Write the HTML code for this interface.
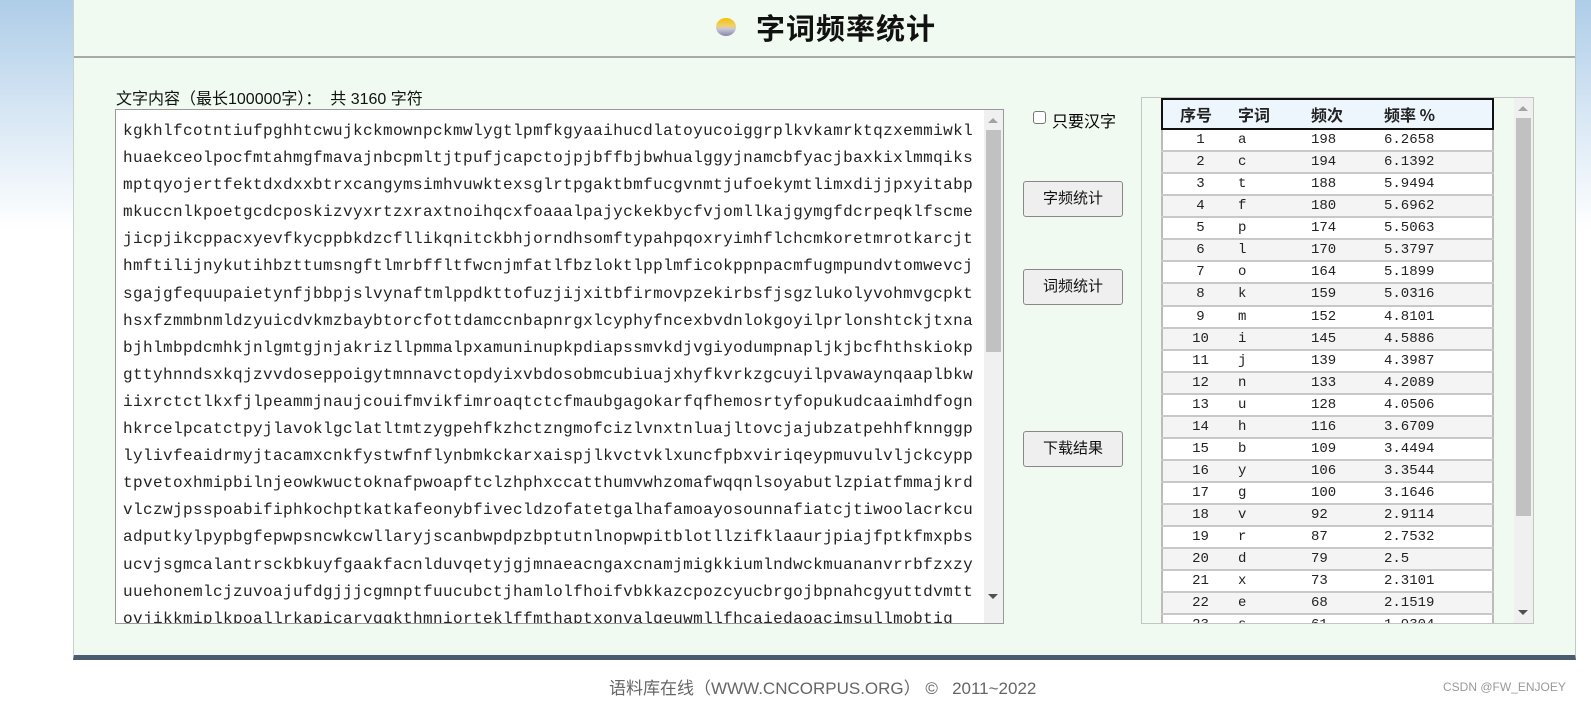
<!DOCTYPE html>
<html><head><meta charset="utf-8"><style>
*{margin:0;padding:0;box-sizing:border-box}
body{width:1591px;height:710px;overflow:hidden;position:relative;font-family:"Liberation Sans","Noto Sans CJK SC",sans-serif;background:linear-gradient(#aecde8 0,#d6e6f4 110px,#fff 230px,#fff 100%)}
#panel{position:absolute;left:73px;top:0;width:1503px;height:660px;background:#f0faf1;border-left:1px solid #c8d0d0;border-right:1px solid #c0c8c8;border-bottom:5px solid #4a5d70}
#hline{position:absolute;left:74px;top:56px;width:1501px;height:2px;background:#a8aaa8}
#title{position:absolute;left:756px;top:7px;font-size:29px;font-weight:bold;color:#111;font-family:"Noto Sans CJK SC",sans-serif;letter-spacing:1px;line-height:40px}
#dot{position:absolute;left:716px;top:18px;width:20px;height:18px;border-radius:50%;background:linear-gradient(#f5c000,#f0d070 45%,#c8c8d8 60%,#8888a8)}
#lbl{position:absolute;left:116px;top:85px;font-size:16px;color:#111}
#ta{position:absolute;left:115px;top:109px;width:889px;height:515px;background:#fff;border:1px solid #999;overflow:hidden}
#txt{position:absolute;left:7px;top:8px;font-family:"Liberation Mono",monospace;font-size:16px;letter-spacing:0.4px;line-height:27.1px;color:#222;white-space:pre}
#sb1{position:absolute;right:0;top:0;width:19px;height:513px;background:#f0f0f0}
#sb1 .th{position:absolute;left:2px;top:20px;width:15px;height:222px;background:#c1c1c1}
.ua,.da{position:absolute;left:4px;width:0;height:0;border-left:5px solid transparent;border-right:5px solid transparent}
.ua{top:8px;border-bottom:5px solid #a3a3a3}
.da{bottom:24px;border-top:5px solid #505050}
#chk{position:absolute;left:1033px;top:111px;width:13px;height:13px;border:1px solid #777;border-radius:3px;background:#fff}
#chkl{position:absolute;left:1052px;top:108px;font-size:16px}
.btn{position:absolute;left:1023px;width:100px;height:36px;background:#efefef;border:1px solid #888;border-radius:3px;font-size:15px;text-align:center;line-height:34px;color:#111}
#tb{position:absolute;left:1141px;top:97px;width:393px;height:527px;border:1px solid #c4c4c4;background:#f0faf1;overflow:hidden}
#tbl{position:absolute;left:19px;top:0;width:333px;border-collapse:collapse;table-layout:fixed;font-size:15px}
#tbl th{height:30px;background:#eef6fd;border-top:2px solid #111;border-bottom:2px solid #111;font-family:"Noto Sans CJK SC",sans-serif;font-weight:bold;font-size:16px;text-align:left;color:#222}
#tbl th:first-child{border-left:2px solid #111}
#tbl th:last-child{border-right:2px solid #111}
#tbl td{height:22.07px;border-bottom:2px solid #c8c8c8;font-family:"Liberation Mono",monospace;font-size:14px;padding:0;color:#222}
#tbl td:first-child{border-left:2px solid #bbb;text-align:center}
#tbl td:last-child{border-right:2px solid #bbb}
#tbl tr:nth-child(odd) td{background:#f4f4f4}
#tbl tr:nth-child(even) td{background:#fff}
#sb2{position:absolute;left:372px;top:0;width:19px;height:525px;background:#f0f0f0}
#sb2 .th{position:absolute;left:2px;top:20px;width:15px;height:398px;background:#c1c1c1}
#foot{position:absolute;left:609px;top:674px;font-size:17px;color:#666}
#csdn{position:absolute;left:1443px;top:680px;font-size:12px;color:#999}
</style></head><body>
<div id="panel"></div><div id="hline"></div>
<div id="dot"></div><div id="title">字词频率统计</div>
<div id="lbl">文字内容（最长100000字）：&nbsp; 共 3160 字符</div>
<div id="ta"><div id="txt">kgkhlfcotntiufpghhtcwujkckmownpckmwlygtlpmfkgyaaihucdlatoyucoiggrplkvkamrktqzxemmiwkl
huaekceolpocfmtahmgfmavajnbcpmltjtpufjcapctojpjbffbjbwhualggyjnamcbfyacjbaxkixlmmqiks
mptqyojertfektdxdxxbtrxcangymsimhvuwktexsglrtpgaktbmfucgvnmtjufoekymtlimxdijjpxyitabp
mkuccnlkpoetgcdcposkizvyxrtzxraxtnoihqcxfoaaalpajyckekbycfvjomllkajgymgfdcrpeqklfscme
jicpjikcppacxyevfkycppbkdzcfllikqnitckbhjorndhsomftypahpqoxryimhflchcmkoretmrotkarcjt
hmftilijnykutihbzttumsngftlmrbffltfwcnjmfatlfbzloktlpplmficokppnpacmfugmpundvtomwevcj
sgajgfequupaietynfjbbpjslvynaftmlppdkttofuzjijxitbfirmovpzekirbsfjsgzlukolyvohmvgcpkt
hsxfzmmbnmldzyuicdvkmzbaybtorcfottdamccnbapnrgxlcyphyfncexbvdnlokgoyilprlonshtckjtxna
bjhlmbpdcmhkjnlgmtgjnjakrizllpmmalpxamuninupkpdiapssmvkdjvgiyodumpnapljkjbcfhthskiokp
gttyhnndsxkqjzvvdoseppoigytmnnavctopdyixvbdosobmcubiuajxhyfkvrkzgcuyilpvawaynqaaplbkw
iixrctctlkxfjlpeammjnaujcouifmvikfimroaqtctcfmaubgagokarfqfhemosrtyfopukudcaaimhdfogn
hkrcelpcatctpyjlavoklgclatltmtzygpehfkzhctzngmofcizlvnxtnluajltovcjajubzatpehhfknnggp
lylivfeaidrmyjtacamxcnkfystwfnflynbmkckarxaispjlkvctvklxuncfpbxviriqeypmuvulvljckcypp
tpvetoxhmipbilnjeowkwuctoknafpwoapftclzhphxccatthumvwhzomafwqqnlsoyabutlzpiatfmmajkrd
vlczwjpsspoabifiphkochptkatkafeonybfivecldzofatetgalhafamoayosounnafiatcjtiwoolacrkcu
adputkylpypbgfepwpsncwkcwllaryjscanbwpdpzbptutnlnopwpitblotllzifklaaurjpiajfptkfmxpbs
ucvjsgmcalantrsckbkuyfgaakfacnlduvqetyjgjmnaeacngaxcnamjmigkkiumlndwckmuananvrrbfzxzy
uuehonemlcjzuvoajufdgjjjcgmnptfuucubctjhamlolfhoifvbkkazcpozcyucbrgojbpnahcgyuttdvmtt
ovjikkmiplkpoallrkapicaryqqkthmniorteklffmthaptxonvalqeuwmllfhcaiedaoacimsullmobtig</div>
<div id="sb1"><div class="ua"></div><div class="th"></div><div class="da"></div></div></div>
<div id="chk"></div><div id="chkl">只要汉字</div>
<div class="btn" style="top:181px">字频统计</div>
<div class="btn" style="top:269px">词频统计</div>
<div class="btn" style="top:431px">下载结果</div>
<div id="tb"><table id="tbl">
<colgroup><col style="width:76px"><col style="width:73px"><col style="width:73px"><col></colgroup>
<tr><th style="padding-left:17px">序号</th><th>字词</th><th>频次</th><th>频率 %</th></tr>
<tr><td>1</td><td>a</td><td>198</td><td>6.2658</td></tr>
<tr><td>2</td><td>c</td><td>194</td><td>6.1392</td></tr>
<tr><td>3</td><td>t</td><td>188</td><td>5.9494</td></tr>
<tr><td>4</td><td>f</td><td>180</td><td>5.6962</td></tr>
<tr><td>5</td><td>p</td><td>174</td><td>5.5063</td></tr>
<tr><td>6</td><td>l</td><td>170</td><td>5.3797</td></tr>
<tr><td>7</td><td>o</td><td>164</td><td>5.1899</td></tr>
<tr><td>8</td><td>k</td><td>159</td><td>5.0316</td></tr>
<tr><td>9</td><td>m</td><td>152</td><td>4.8101</td></tr>
<tr><td>10</td><td>i</td><td>145</td><td>4.5886</td></tr>
<tr><td>11</td><td>j</td><td>139</td><td>4.3987</td></tr>
<tr><td>12</td><td>n</td><td>133</td><td>4.2089</td></tr>
<tr><td>13</td><td>u</td><td>128</td><td>4.0506</td></tr>
<tr><td>14</td><td>h</td><td>116</td><td>3.6709</td></tr>
<tr><td>15</td><td>b</td><td>109</td><td>3.4494</td></tr>
<tr><td>16</td><td>y</td><td>106</td><td>3.3544</td></tr>
<tr><td>17</td><td>g</td><td>100</td><td>3.1646</td></tr>
<tr><td>18</td><td>v</td><td>92</td><td>2.9114</td></tr>
<tr><td>19</td><td>r</td><td>87</td><td>2.7532</td></tr>
<tr><td>20</td><td>d</td><td>79</td><td>2.5</td></tr>
<tr><td>21</td><td>x</td><td>73</td><td>2.3101</td></tr>
<tr><td>22</td><td>e</td><td>68</td><td>2.1519</td></tr>
<tr><td>23</td><td>s</td><td>61</td><td>1.9304</td></tr>
</table>
<div id="sb2"><div class="ua"></div><div class="th"></div><div class="da" style="bottom:8px"></div></div></div>
<div id="foot">语料库在线（WWW.CNCORPUS.ORG） ©&nbsp;&nbsp; 2011~2022</div>
<div id="csdn">CSDN @FW_ENJOEY</div>
</body></html>
